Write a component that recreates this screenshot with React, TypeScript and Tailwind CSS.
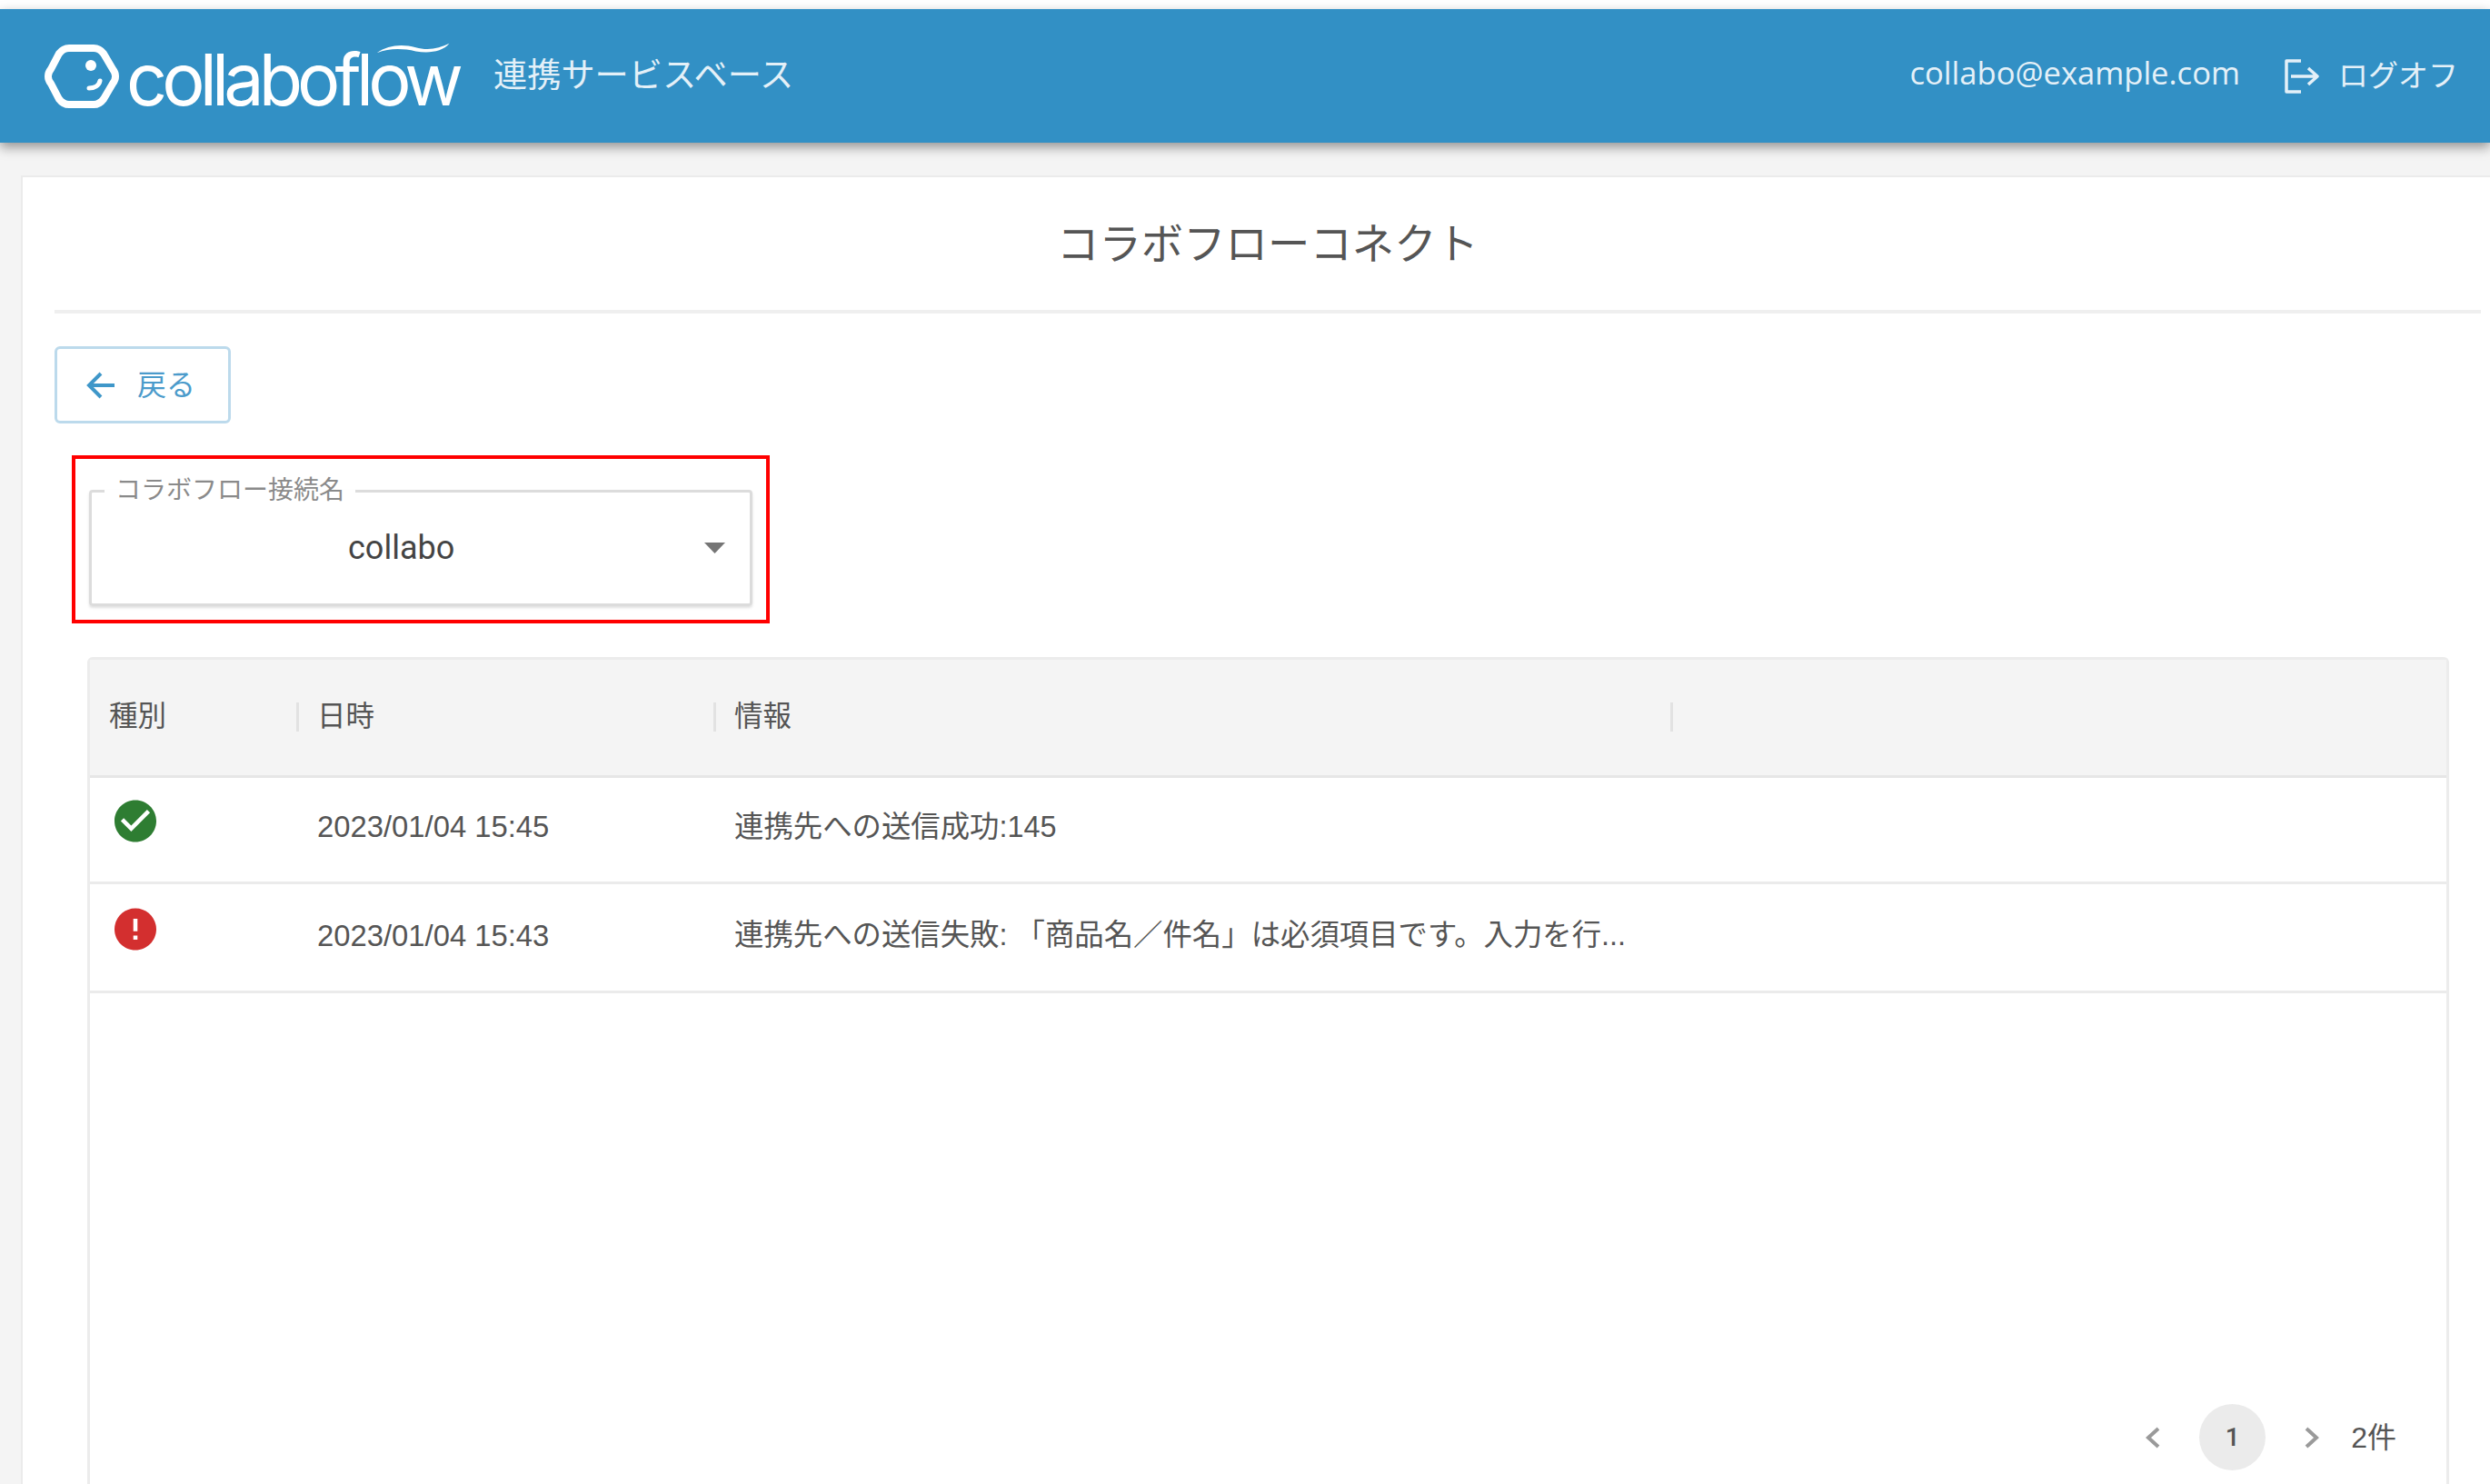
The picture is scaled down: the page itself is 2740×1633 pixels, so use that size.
const jpFont = "font-['Liberation_Sans','Noto_Sans_CJK_JP',sans-serif]";

function LogoMark() {
  return (
    <svg width="82" height="70" viewBox="0 0 82 70" fill="none" className="shrink-0">
      <path
        d="M27 4H54C59 4 62 6 65 10L75 27C79 32 79 38 75 43L65 60C62 64 59 66 54 66H27C22 66 19 64 16 60L7 43C3 38 3 32 7 27L16 10C19 6 22 4 27 4Z"
        stroke="white"
        strokeWidth="8"
      />
      <circle cx="51" cy="23" r="6" fill="white" />
      <path d="M49 48C55 48 60 45 61 40" stroke="white" strokeWidth="5" strokeLinecap="round" />
    </svg>
  );
}

function Wordmark() {
  return (
    <div className="relative ml-[8px] mt-[6px] h-[74px] w-[362px]">
      <span className="block text-[79px] leading-[74px] tracking-[-5.9px] text-white font-['Inter',sans-serif] font-normal">
        collaboflow
      </span>
      <svg width="92" height="12" viewBox="0 0 94 14" className="absolute right-0 top-[-3px]">
        <path d="M0 13C14 3 32 1 50 6C64 10 80 8 93 1C84 12 66 14 50 11C32 7 16 7 0 13Z" fill="white" />
      </svg>
    </div>
  );
}

function LogoutIcon() {
  return (
    <svg width="40" height="38" viewBox="0 0 40 38" fill="none" stroke="#e4f0f8" strokeWidth="3.5">
      <path d="M19 2H3V36H19" strokeLinejoin="round" />
      <path d="M8 19H36M27 10L37 19L27 28" strokeLinejoin="round" />
    </svg>
  );
}

function SuccessIcon() {
  return (
    <svg width="46" height="47" viewBox="2 2 20 20" fill="#2e7d32">
      <path d="M12 2C6.48 2 2 6.48 2 12s4.48 10 10 10 10-4.48 10-10S17.52 2 12 2zm-2 15l-5-5 1.41-1.41L10 14.17l7.59-7.59L19 8l-9 9z" />
    </svg>
  );
}

function ErrorIcon() {
  return (
    <svg width="46" height="47" viewBox="2 2 20 20" fill="#d32f2f">
      <path d="M12 2C6.48 2 2 6.48 2 12s4.48 10 10 10 10-4.48 10-10S17.52 2 12 2zm1 15h-2v-2h2v2zm0-4h-2V7h2v6z" />
    </svg>
  );
}

function HeaderSeparator() {
  return <div className="h-[32px] w-[3px] shrink-0 bg-[#e2e2e2]" />;
}

export default function App() {
  return (
    <div className={`flex h-screen flex-col overflow-hidden bg-white pt-[10px] text-[#555555] ${jpFont}`}>
      <header className="relative z-10 flex h-[147px] shrink-0 items-center justify-between bg-[#3290c5] pl-[49px] pr-[35px] text-[#e4f0f8] shadow-[0_5px_12px_rgba(0,0,0,0.4)]">
        <div className="flex items-center">
          <LogoMark />
          <Wordmark />
          <span className="ml-[42px] text-[37.2px] leading-none">連携サービスベース</span>
        </div>
        <div className="flex items-center">
          <span className="pb-[7px] text-[34.6px] leading-none font-['Open_Sans',sans-serif]">collabo@example.com</span>
          <span className="ml-[48px]">
            <LogoutIcon />
          </span>
          <span className="ml-[20px] text-[33px] leading-none">ログオフ</span>
        </div>
      </header>

      <div className="flex min-h-0 flex-1 flex-col bg-[#f4f4f4] pl-[23px] pt-[36px]">
        <main className="flex min-h-0 flex-1 flex-col border-l-[2px] border-t-[2px] border-[#ebebeb] bg-white pl-[35px] pr-[10px]">
          <h1 className="flex h-[150px] shrink-0 items-center justify-center border-b-[4px] border-[#efefef] pt-[3px] text-[46.4px] font-normal text-[#555555]">
            コラボフローコネクト
          </h1>

          <button className="mt-[36px] flex h-[85px] w-[194px] shrink-0 items-center rounded-[6px] border-[3px] border-[#bcdaec] pl-[32px] text-[#4b9bcb]">
            <svg width="32" height="30" viewBox="0 0 32 30" fill="none" stroke="#3f97c9" strokeWidth="4">
              <path d="M31 15H4M16 2L3 15L16 28" />
            </svg>
            <span className="ml-[24px] text-[32px] leading-none">戻る</span>
          </button>

          <section className="ml-[19px] mt-[35px] h-[185px] w-[768px] shrink-0 border-[4px] border-[#ff0000] pl-[15px] pt-[20px]">
            <fieldset className="flex h-[142px] w-[730px] flex-col rounded-[4px] border-[3px] border-[#dcdcdc] shadow-[0_2px_3px_rgba(0,0,0,0.12)]">
              <legend className="ml-[14px] px-[12px] text-[28px] leading-[30px] text-[#8a8a8a]">コラボフロー接続名</legend>
              <div className="flex flex-1 items-center justify-between pb-[13px] pl-[282px] pr-[27px]">
                <span className="text-[36px] leading-none text-[#444444] font-['Roboto',sans-serif]">collabo</span>
                <svg width="23" height="12" viewBox="0 0 23 12" fill="#757575">
                  <path d="M0 0H23L11.5 12Z" />
                </svg>
              </div>
            </fieldset>
          </section>

          <section className="ml-[36px] mt-[37px] flex min-h-0 w-[2599px] flex-1 flex-col rounded-t-[6px] border-x-[3px] border-t-[3px] border-[#ececec]">
            <div className="flex h-[130px] shrink-0 items-center border-b-[3px] border-[#e6e6e6] bg-[#f4f4f4] pb-[2px] text-[31.5px]">
              <div className="w-[227px] pl-[21px]">種別</div>
              <HeaderSeparator />
              <div className="w-[456px] pl-[20px]">日時</div>
              <HeaderSeparator />
              <div className="w-[1050px] pl-[20px]">情報</div>
              <HeaderSeparator />
            </div>

            <div className="flex h-[117px] shrink-0 items-center border-b-[3px] border-[#ebebeb]">
              <div className="w-[250px] self-start pl-[27px] pt-[24px]">
                <SuccessIcon />
              </div>
              <div className="w-[459px] pb-[6px] text-[32.8px]">2023/01/04 15:45</div>
              <div className="pb-[6px] text-[32.4px]">連携先への送信成功:145</div>
            </div>
            <div className="flex h-[120px] shrink-0 items-center border-b-[3px] border-[#ebebeb]">
              <div className="w-[250px] self-start pl-[27px] pt-[26px]">
                <ErrorIcon />
              </div>
              <div className="w-[459px] pb-[4px] text-[32.8px]">2023/01/04 15:43</div>
              <div className="pb-[4px] text-[32.4px]">連携先への送信失敗: 「商品名／件名」は必須項目です。入力を行...</div>
            </div>

            <div className="flex-1" />

            <footer className="flex shrink-0 items-center justify-end pb-[15px] pr-[55px] text-[#555555]">
              <svg width="16" height="24" viewBox="0 0 16 24" fill="none" stroke="#9a9a9a" strokeWidth="4">
                <path d="M14 2L3 12L14 22" />
              </svg>
              <div className="ml-[43px] flex h-[73px] w-[73px] items-center justify-center rounded-full bg-[#ebebeb] text-[28px] font-medium font-['Roboto',sans-serif]">1</div>
              <svg width="16" height="24" viewBox="0 0 16 24" fill="none" stroke="#9a9a9a" strokeWidth="4" className="ml-[43px]">
                <path d="M2 2L13 12L2 22" />
              </svg>
              <span className="ml-[35px] text-[32px] leading-none">2件</span>
            </footer>
          </section>
        </main>
      </div>
    </div>
  );
}
